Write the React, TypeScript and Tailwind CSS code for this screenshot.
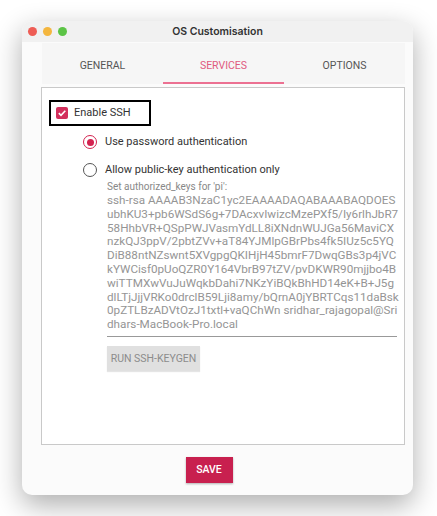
import React from "react";

const KEY_LINES = [
  "ssh-rsa AAAAB3NzaC1yc2EAAAADAQABAAABAQDOES",
  "ubhKU3+pb6WSdS6g+7DAcxvIwizcMzePXf5/Iy6rlhJbR7",
  "58HhbVR+QSpPWJVasmYdLL8iXNdnWUJGa56MaviCX",
  "nzkQJ3ppV/2pbtZVv+aT84YJMlpGBrPbs4fk5IUz5c5YQ",
  "DiB88ntNZswnt5XVgpgQKIHjH45bmrF7DwqGBs3p4jVC",
  "kYWCisf0pUoQZR0Y164VbrB97tZV/pvDKWR90mjjbo4B",
  "wiTTMXwVuJuWqkbDahi7NKzYiBQkBhHD14eK+B+J5g",
  "dlLTjJjjVRKo0drclB59Lji8amy/bQrnA0jYBRTCqs11daBsk",
  "0pZTLBzADVtOzJ1txtl+vaQChWn sridhar_rajagopal@Sri",
  "dhars-MacBook-Pro.local",
];

const tabs = ["GENERAL", "SERVICES", "OPTIONS"];

function Radio({ checked, label }: { checked?: boolean; label: string }) {
  return (
    <div className="flex items-center h-[14px]">
      <span
        className={
          "w-[14px] h-[14px] rounded-full border-[1.5px] flex items-center justify-center " +
          (checked ? "border-[#d3224f]" : "border-[#555]")
        }
      >
        {checked && <span className="w-[7px] h-[7px] rounded-full bg-[#d3224f]" />}
      </span>
      <span className="ml-[8px] text-[11px] text-[#333]">{label}</span>
    </div>
  );
}

export default function App() {
  return (
    <div
      className="w-[437px] h-[516px] bg-white pt-[21px] pl-[22px] overflow-hidden"
      style={{ fontFamily: "Roboto, 'Liberation Sans', sans-serif" }}
    >
      <div className="w-[391px] h-[474px] rounded-[10px] bg-[#fbfbfb] overflow-hidden flex flex-col shadow-[0_10px_28px_rgba(0,0,0,0.32)]">
        {/* title bar */}
        <div className="h-[21px] bg-[#f1f1f1] flex items-center relative shrink-0">
          <div className="flex gap-[6px] pl-[6px]">
            <span className="w-[9px] h-[9px] rounded-full bg-[#ee5d55]" />
            <span className="w-[9px] h-[9px] rounded-full bg-[#f4b63e]" />
            <span className="w-[9px] h-[9px] rounded-full bg-[#5cc446]" />
          </div>
          <div
            className="absolute inset-0 flex items-center justify-center text-[10.5px] font-semibold text-[#333]"
            style={{ fontFamily: "Inter, 'Liberation Sans', sans-serif" }}
          >
            OS Customisation
          </div>
        </div>

        <div className="flex-1 flex flex-col pl-[19px] pr-[8px] pt-[1px]">
          {/* tabs */}
          <div className="ml-[1px] h-[41px] bg-[#f6f6f6] flex">
            {tabs.map((t) => (
              <div
                key={t}
                className={
                  "flex-1 flex items-center justify-center text-[10.5px] border-b-2 pt-[6px] " +
                  (t === "SERVICES"
                    ? "text-[#e05a80] border-[#ec7192]"
                    : "text-[#555] border-transparent")
                }
              >
                {t}
              </div>
            ))}
          </div>

          {/* panel */}
          <div className="mt-[3px] h-[358px] bg-white border border-[#c9c9c9] pl-[7px] pt-[12px]">
            <div className="w-[102px] h-[26px] border-2 border-black flex items-center pl-[5px]">
              <span className="w-[12px] h-[12px] rounded-[2px] bg-[#d32f5c] flex items-center justify-center">
                <svg width="10" height="10" viewBox="0 0 10 10">
                  <path d="M1.8 5.2 L4 7.3 L8.3 2.8" fill="none" stroke="white" strokeWidth="1.6" />
                </svg>
              </span>
              <span className="ml-[6px] text-[11px] text-[#333]">Enable SSH</span>
            </div>

            <div className="pl-[34px] pt-[9px]">
              <Radio checked label="Use password authentication" />
              <div className="mt-[14px]">
                <Radio label="Allow public-key authentication only" />
              </div>
              <div className="pl-[24px] pt-[3px]">
                <div className="text-[10px] text-[#888] leading-[14px]">Set authorized_keys for 'pi':</div>
                <div className="w-[290px] border-b border-[#999] pb-[4px] text-[11.7px] leading-[13.8px] text-[#959595] whitespace-nowrap">
                  {KEY_LINES.map((l) => (
                    <div key={l}>{l}</div>
                  ))}
                </div>
                <div className="mt-[9px] w-[93px] h-[25px] bg-[#e0e0e0] shadow-[0_1px_1px_rgba(0,0,0,0.1)] flex items-center justify-center text-[10.5px] text-[#8c8c8c]">
                  RUN SSH-KEYGEN
                </div>
              </div>
            </div>
          </div>

          {/* footer */}
          <div className="flex justify-center pt-[12px] pr-[28px]">
            <div className="w-[47px] h-[26px] bg-[#c8204f] shadow-[0_1px_2px_rgba(0,0,0,0.3)] flex items-center justify-center text-[10.5px] font-medium text-white">
              SAVE
            </div>
          </div>
        </div>
      </div>
    </div>
  );
}
